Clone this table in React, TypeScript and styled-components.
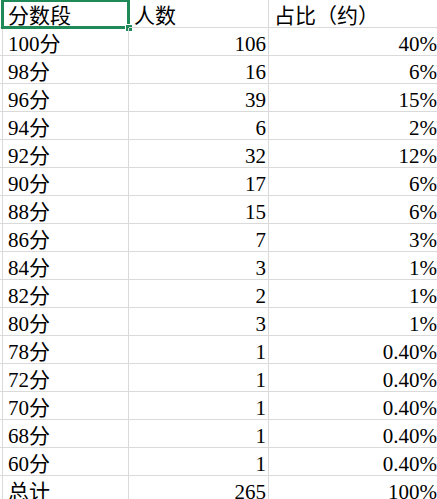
import React from "react";
import styled, { createGlobalStyle } from "styled-components";

const Global = createGlobalStyle`
  html, body {
    margin: 0;
    padding: 0;
    background: #ffffff;
    overflow: hidden;
  }
  #root {
    width: 437px;
    height: 499px;
    overflow: hidden;
  }
`;

const Sheet = styled.div`
  display: grid;
  grid-template-columns: 3px 126px 140px 171px;
  grid-auto-rows: 28px;
  width: 440px;
  font-family: "Liberation Serif", "Noto Sans CJK SC", serif;
  font-size: 21px;
  color: #000000;
`;

const Gutter = styled.div`
  box-sizing: border-box;
  border-right: 1px solid #dadada;
  border-bottom: 1px solid #dadada;
`;

const Cell = styled.div<{ $align?: "left" | "right" }>`
  position: relative;
  box-sizing: border-box;
  height: 28px;
  padding: 6px ${(p) => (p.$align === "right" ? "2px" : "4px")} 0
    ${(p) => (p.$align === "right" ? "4px" : "5px")};
  line-height: 21px;
  white-space: nowrap;
  text-align: ${(p) => p.$align ?? "left"};
  border-right: 1px solid #dadada;
  border-bottom: 1px solid #dadada;
`;

const Selection = styled.div`
  position: absolute;
  left: -2px;
  top: 0;
  right: -2px;
  bottom: -2px;
  border: 3px solid #1f8a58;
  border-top-width: 2px;
  pointer-events: none;
`;

const Handle = styled.div`
  position: absolute;
  right: -5px;
  bottom: -5px;
  width: 6px;
  height: 6px;
  background: #1f8a58;
  border-left: 1px solid #ffffff;
  border-top: 1px solid #ffffff;
`;

const rows: [string, string, string][] = [
  ["100分", "106", "40%"],
  ["98分", "16", "6%"],
  ["96分", "39", "15%"],
  ["94分", "6", "2%"],
  ["92分", "32", "12%"],
  ["90分", "17", "6%"],
  ["88分", "15", "6%"],
  ["86分", "7", "3%"],
  ["84分", "3", "1%"],
  ["82分", "2", "1%"],
  ["80分", "3", "1%"],
  ["78分", "1", "0.40%"],
  ["72分", "1", "0.40%"],
  ["70分", "1", "0.40%"],
  ["68分", "1", "0.40%"],
  ["60分", "1", "0.40%"],
  ["总计", "265", "100%"],
];

export default function App() {
  return (
    <>
      <Global />
      <Sheet>
        <Gutter />
        <Cell>
          分数段
          <Selection>
            <Handle />
          </Selection>
        </Cell>
        <Cell>人数</Cell>
        <Cell>占比（约）</Cell>
        {rows.map(([a, b, c]) => (
          <React.Fragment key={a}>
            <Gutter />
            <Cell>{a}</Cell>
            <Cell $align="right">{b}</Cell>
            <Cell $align="right">{c}</Cell>
          </React.Fragment>
        ))}
      </Sheet>
    </>
  );
}
